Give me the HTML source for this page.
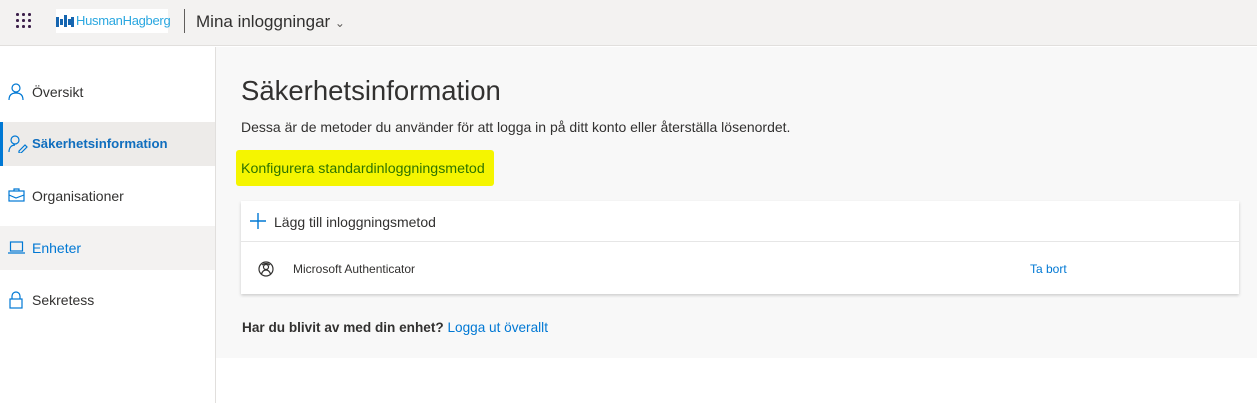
<!DOCTYPE html>
<html><head><meta charset="utf-8"><style>
*{box-sizing:border-box;margin:0;padding:0}
body{width:1257px;height:403px;overflow:hidden;background:#fff;font-family:"Liberation Sans",sans-serif;color:#323130;position:relative}
.top{position:absolute;left:0;top:0;width:1257px;height:46px;background:#f3f2f1;border-bottom:1px solid #e1dfdd}
.waffle{position:absolute;left:16px;top:13px;width:16px;height:16px}
.waffle i{position:absolute;width:2.5px;height:2.5px;background:#3b1f4a;border-radius:50%}
.logo{position:absolute;left:56px;top:9px;width:112px;height:24px;background:#fff}
.logo span{position:absolute;left:20px;top:4px;font-size:13px;color:#2aa7e0;letter-spacing:-0.3px}
.sep{position:absolute;left:184px;top:9px;width:1px;height:24px;background:#605e5c}
.title{position:absolute;left:196px;top:12px;font-size:17px;color:#323130}
.side{position:absolute;left:0;top:47px;width:216px;height:356px;border-right:1px solid #e1dfdd;background:#fff}
.item{position:absolute;left:0;width:215px;height:44px;font-size:14px;line-height:44px;padding-left:32px}
.item svg{position:absolute;left:8px;top:13px}
.main{position:absolute;left:216px;top:47px;width:1041px;height:311px;background:#f8f8f8}
h1{position:absolute;left:25px;top:28px;font-size:27.5px;font-weight:normal;color:#323130}
.desc{position:absolute;left:25px;top:72px;font-size:14px}
.hl{position:absolute;left:20px;top:103px;width:258px;height:36px;background:#f5f500;border-radius:3px}
.hl span{position:absolute;left:5px;top:11px;font-size:14.2px;color:#2d7300}
.card{position:absolute;left:25px;top:154px;width:998px;height:93px;background:#fff;box-shadow:0 1.5px 3px rgba(0,0,0,.18)}
.card .div{position:absolute;left:0;top:40px;width:100%;height:1px;background:#e6e6e6}
.bottom{position:absolute;left:26px;top:273px;font-size:13.6px}
a{color:#0078d4;text-decoration:none}
</style></head><body>
<div class="top">
 <div class="waffle">
  <i style="left:0;top:0"></i><i style="left:6px;top:0"></i><i style="left:12px;top:0"></i>
  <i style="left:0;top:6px"></i><i style="left:6px;top:6px"></i><i style="left:12px;top:6px"></i>
  <i style="left:0;top:12px"></i><i style="left:6px;top:12px"></i><i style="left:12px;top:12px"></i>
 </div>
 <div class="logo"><svg style="position:absolute;left:0;top:6px" width="18" height="12"><path d="M0 2h3v10H0zM4 4h3v6H4zM8 0h3v12H8zM12 4h3v6h-3zM15 2h3v10h-3z" fill="#1565b0"/></svg><span>HusmanHagberg</span></div>
 <div class="sep"></div>
 <div class="title">Mina inloggningar <span style="font-size:12px;color:#605e5c">&#8964;</span></div>
</div>
<div class="side">
 <div class="item" style="top:23px"><svg width="18" height="18" fill="none" stroke="#0078d4" stroke-width="1.2"><circle cx="8" cy="5" r="4"/><path d="M1 17c0-5 3-7 7-7s7 2 7 7"/></svg>Översikt</div>
 <div class="item" style="top:75px;background:#edebe9;color:#106ebe;font-weight:bold;font-size:13.2px;border-left:3px solid #0078d4;padding-left:29px"><svg width="20" height="18" fill="none" stroke="#0078d4" stroke-width="1.2" style="left:5px"><circle cx="7" cy="5" r="4"/><path d="M1 17c0-5 3-7 6-7M11 16l6-6 2 2-6 6h-2z"/></svg>Säkerhetsinformation</div>
 <div class="item" style="top:127px"><svg width="18" height="18" fill="none" stroke="#0078d4" stroke-width="1.2"><rect x="1" y="4" width="15" height="10"/><path d="M6 4V2h5v2M1 8l7 3 8-3"/></svg>Organisationer</div>
 <div class="item" style="top:179px;background:#f3f2f1;color:#0078d4"><svg width="18" height="18" fill="none" stroke="#0078d4" stroke-width="1.2"><rect x="2.5" y="3" width="12" height="9"/><path d="M0 14h17"/></svg>Enheter</div>
 <div class="item" style="top:231px"><svg width="18" height="18" fill="none" stroke="#0078d4" stroke-width="1.2"><rect x="2" y="8" width="12" height="9"/><path d="M4 8V5a4 4 0 0 1 8 0v3"/></svg>Sekretess</div>
</div>
<div class="main">
 <h1>Säkerhetsinformation</h1>
 <div class="desc">Dessa är de metoder du använder för att logga in på ditt konto eller återställa lösenordet.</div>
 <div class="hl"><span>Konfigurera standardinloggningsmetod</span></div>
 <div class="card">
  <svg style="position:absolute;left:9px;top:12px" width="16" height="16" stroke="#0078d4" stroke-width="1.4"><path d="M8 0v16M0 8h16"/></svg>
  <div style="position:absolute;left:33px;top:13px;font-size:14px">Lägg till inloggningsmetod</div>
  <div class="div"></div>
  <svg style="position:absolute;left:17px;top:59px" width="16" height="18" fill="none" stroke="#323130" stroke-width="1.2"><circle cx="8" cy="9" r="7"/><circle cx="8" cy="7" r="2.5"/><path d="M3.5 14c1-3 3-4 4.5-4s3.5 1 4.5 4M4 5q4-3 8 0"/></svg>
  <div style="position:absolute;left:52px;top:61px;font-size:12px">Microsoft Authenticator</div>
  <a style="position:absolute;left:789px;top:61px;font-size:12px">Ta bort</a>
 </div>
 <div class="bottom"><b style="font-weight:bold">Har du blivit av med din enhet?</b> <a>Logga ut överallt</a></div>
</div>
</body></html>
